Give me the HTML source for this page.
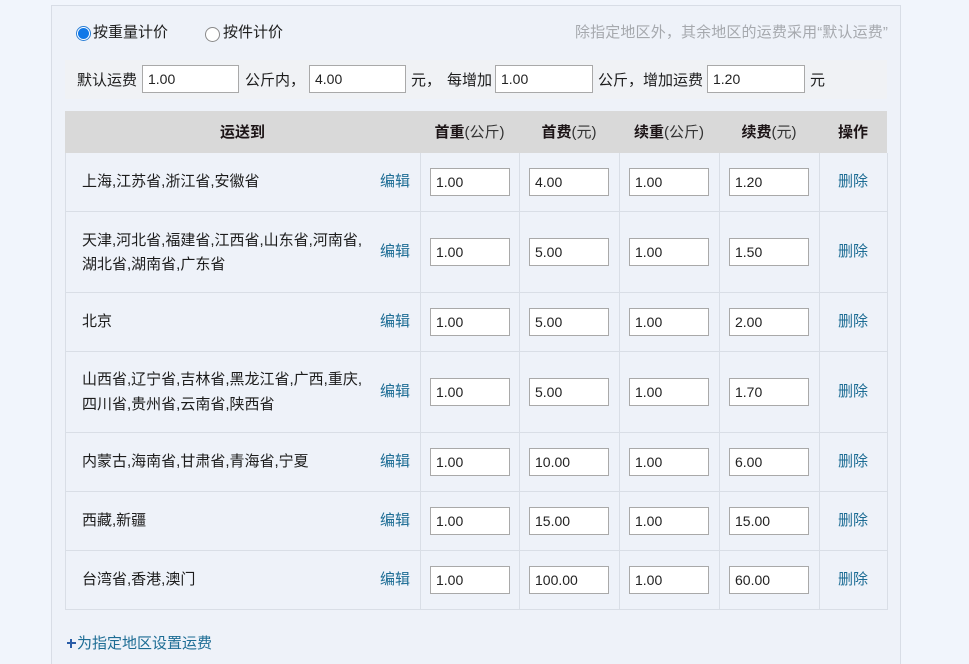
<!DOCTYPE html>
<html lang="zh-CN">
<head>
<meta charset="utf-8">
<title>运费设置</title>
<style>
html,body{margin:0;padding:0;width:969px;height:664px;overflow:hidden;background:#f1f5fc;}
body{position:relative;font-family:"Liberation Sans","Noto Sans CJK SC",sans-serif;font-size:15px;color:#1c1c1c;}
div,span{position:absolute;box-sizing:border-box;white-space:nowrap;}
.t{line-height:20px;height:20px;margin-top:1px;}
.ln{background:#d9dee6;}
.in{background:#fff;border:1px solid #a9a9a9;height:28px;line-height:27px;padding-left:5px;color:#222;font-size:14px;}
.s{width:80px;}
.lk{color:#1c6c94;line-height:20px;height:20px;margin-top:1px;}
.h{font-weight:bold;line-height:20px;height:20px;margin-top:1px;color:#1c1416;text-align:center;}
.h b{font-weight:normal;color:#333;}
</style>
</head>
<body>
<div style="left:51px;top:5px;width:850px;height:670px;background:#eef2f9;border:1px solid #d8dde6;"></div>

<div style="left:76px;top:26px;width:15px;height:15px;border-radius:50%;background:#fff;border:1px solid #2b7fd6;"></div>
<div style="left:78px;top:28px;width:11px;height:11px;border-radius:50%;background:#0f78e8;"></div>
<div class="t" style="left:93px;top:22px;">按重量计价</div>
<div style="left:205px;top:27px;width:15px;height:15px;border-radius:50%;background:#fff;border:1px solid #8a8a8a;"></div>
<div class="t" style="left:223px;top:22px;">按件计价</div>
<div class="t" style="left:575px;top:22px;color:#a6a9ae;letter-spacing:0.14px;">除指定地区外，其余地区的运费采用“默认运费”</div>

<div style="left:65px;top:60px;width:822px;height:39px;background:#f0f2f5;"></div>
<div class="t" style="left:77px;top:70px;">默认运费</div>
<div class="in" style="left:142px;top:65px;width:97px;">1.00</div>
<div class="t" style="left:245px;top:70px;">公斤内，</div>
<div class="in" style="left:309px;top:65px;width:97px;">4.00</div>
<div class="t" style="left:411px;top:70px;">元，</div>
<div class="t" style="left:447px;top:70px;">每增加</div>
<div class="in" style="left:495px;top:65px;width:98px;">1.00</div>
<div class="t" style="left:598px;top:70px;">公斤，增加运费</div>
<div class="in" style="left:707px;top:65px;width:98px;">1.20</div>
<div class="t" style="left:810px;top:70px;">元</div>

<div style="left:65px;top:111px;width:822px;height:42px;background:#d9d9d9;"></div>
<div class="h" style="left:65px;top:122px;width:355px;">运送到</div>
<div class="h" style="left:420px;top:122px;width:99px;">首重<b>(公斤)</b></div>
<div class="h" style="left:519px;top:122px;width:100px;">首费<b>(元)</b></div>
<div class="h" style="left:619px;top:122px;width:100px;">续重<b>(公斤)</b></div>
<div class="h" style="left:719px;top:122px;width:100px;">续费<b>(元)</b></div>
<div class="h" style="left:819px;top:122px;width:68px;">操作</div>

<div class="ln" style="left:65px;top:153px;width:1px;height:457px;"></div>
<div class="ln" style="left:420px;top:153px;width:1px;height:457px;"></div>
<div class="ln" style="left:519px;top:153px;width:1px;height:457px;"></div>
<div class="ln" style="left:619px;top:153px;width:1px;height:457px;"></div>
<div class="ln" style="left:719px;top:153px;width:1px;height:457px;"></div>
<div class="ln" style="left:819px;top:153px;width:1px;height:457px;"></div>
<div class="ln" style="left:887px;top:153px;width:1px;height:457px;"></div>
<div class="ln" style="left:65px;top:211px;width:823px;height:1px;"></div>
<div class="ln" style="left:65px;top:292px;width:823px;height:1px;"></div>
<div class="ln" style="left:65px;top:351px;width:823px;height:1px;"></div>
<div class="ln" style="left:65px;top:432px;width:823px;height:1px;"></div>
<div class="ln" style="left:65px;top:491px;width:823px;height:1px;"></div>
<div class="ln" style="left:65px;top:550px;width:823px;height:1px;"></div>
<div class="ln" style="left:65px;top:609px;width:823px;height:1px;"></div>

<!-- row 1 -->
<div class="t" style="left:82px;top:171px;">上海,江苏省,浙江省,安徽省</div>
<div class="lk" style="left:380px;top:171px;">编辑</div>
<div class="in s" style="left:430px;top:168px;">1.00</div>
<div class="in s" style="left:529px;top:168px;">4.00</div>
<div class="in s" style="left:629px;top:168px;">1.00</div>
<div class="in s" style="left:729px;top:168px;">1.20</div>
<div class="lk" style="left:838px;top:171px;">删除</div>

<!-- row 2 -->
<div class="t" style="left:82px;top:230px;">天津,河北省,福建省,江西省,山东省,河南省,</div>
<div class="t" style="left:82px;top:254px;">湖北省,湖南省,广东省</div>
<div class="lk" style="left:380px;top:241px;">编辑</div>
<div class="in s" style="left:430px;top:238px;">1.00</div>
<div class="in s" style="left:529px;top:238px;">5.00</div>
<div class="in s" style="left:629px;top:238px;">1.00</div>
<div class="in s" style="left:729px;top:238px;">1.50</div>
<div class="lk" style="left:838px;top:241px;">删除</div>

<!-- row 3 -->
<div class="t" style="left:82px;top:311px;">北京</div>
<div class="lk" style="left:380px;top:311px;">编辑</div>
<div class="in s" style="left:430px;top:308px;">1.00</div>
<div class="in s" style="left:529px;top:308px;">5.00</div>
<div class="in s" style="left:629px;top:308px;">1.00</div>
<div class="in s" style="left:729px;top:308px;">2.00</div>
<div class="lk" style="left:838px;top:311px;">删除</div>

<!-- row 4 -->
<div class="t" style="left:82px;top:369px;">山西省,辽宁省,吉林省,黑龙江省,广西,重庆,</div>
<div class="t" style="left:82px;top:394px;">四川省,贵州省,云南省,陕西省</div>
<div class="lk" style="left:380px;top:381px;">编辑</div>
<div class="in s" style="left:430px;top:378px;">1.00</div>
<div class="in s" style="left:529px;top:378px;">5.00</div>
<div class="in s" style="left:629px;top:378px;">1.00</div>
<div class="in s" style="left:729px;top:378px;">1.70</div>
<div class="lk" style="left:838px;top:381px;">删除</div>

<!-- row 5 -->
<div class="t" style="left:82px;top:451px;">内蒙古,海南省,甘肃省,青海省,宁夏</div>
<div class="lk" style="left:380px;top:451px;">编辑</div>
<div class="in s" style="left:430px;top:448px;">1.00</div>
<div class="in s" style="left:529px;top:448px;">10.00</div>
<div class="in s" style="left:629px;top:448px;">1.00</div>
<div class="in s" style="left:729px;top:448px;">6.00</div>
<div class="lk" style="left:838px;top:451px;">删除</div>

<!-- row 6 -->
<div class="t" style="left:82px;top:510px;">西藏,新疆</div>
<div class="lk" style="left:380px;top:510px;">编辑</div>
<div class="in s" style="left:430px;top:507px;">1.00</div>
<div class="in s" style="left:529px;top:507px;">15.00</div>
<div class="in s" style="left:629px;top:507px;">1.00</div>
<div class="in s" style="left:729px;top:507px;">15.00</div>
<div class="lk" style="left:838px;top:510px;">删除</div>

<!-- row 7 -->
<div class="t" style="left:82px;top:569px;">台湾省,香港,澳门</div>
<div class="lk" style="left:380px;top:569px;">编辑</div>
<div class="in s" style="left:430px;top:566px;">1.00</div>
<div class="in s" style="left:529px;top:566px;">100.00</div>
<div class="in s" style="left:629px;top:566px;">1.00</div>
<div class="in s" style="left:729px;top:566px;">60.00</div>
<div class="lk" style="left:838px;top:569px;">删除</div>

<div style="left:67px;top:642px;width:9px;height:2px;background:#2a5da8;"></div>
<div style="left:70px;top:639px;width:2px;height:9px;background:#2a5da8;"></div>
<div class="lk" style="left:77px;top:633px;">为指定地区设置运费</div>
</body>
</html>
